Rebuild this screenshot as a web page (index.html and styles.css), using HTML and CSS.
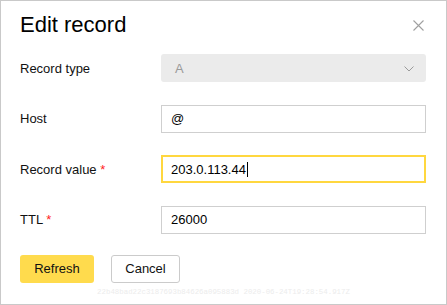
FILE: index.html
```html
<!DOCTYPE html>
<html lang="en">
<head>
<meta charset="utf-8">
<title>Edit record</title>
<link rel="stylesheet" href="styles.css">
</head>
<body>
<div class="dialog">
  <div class="header">
    <h1 class="title">Edit record</h1>
    <button class="close" aria-label="Close">
      <svg width="11" height="11" viewBox="0 0 11 11"><path d="M0.5 0.5L10.5 10.5M10.5 0.5L0.5 10.5" stroke="#a0a0a0" stroke-width="1.1" fill="none"/></svg>
    </button>
  </div>
  <div class="form">
    <div class="label">Record type</div>
    <div class="select">
      <span class="select-value">A</span>
      <svg class="chevron" width="10" height="6" viewBox="0 0 10 6"><path d="M0.5 0.5L5 5L9.5 0.5" stroke="#9a9a9a" stroke-width="1" fill="none"/></svg>
    </div>

    <div class="label">Host</div>
    <div class="input">@</div>

    <div class="label">Record value <span class="req">*</span></div>
    <div class="input input-focused">203.0.113.44<span class="caret"></span></div>

    <div class="label">TTL <span class="req">*</span></div>
    <div class="input">26000</div>
  </div>
  <div class="actions">
    <button class="btn btn-primary">Refresh</button>
    <button class="btn btn-default">Cancel</button>
  </div>
  <div class="meta">22b48bad22c3187693b84626a095883d 2020-06-24T19:28:54.917Z</div>
</div>
</body>
</html>
```

FILE: styles.css
```css
* {
  box-sizing: border-box;
}

html, body {
  margin: 0;
  padding: 0;
  background: #fff;
}

body {
  font-family: "Liberation Sans", Arial, sans-serif;
  color: #000;
}

.dialog {
  width: 447px;
  height: 305px;
  border: 1px solid #c9c9c9;
  padding: 11px 20px 0 18px;
  display: flex;
  flex-direction: column;
}

.header {
  display: flex;
  align-items: center;
  justify-content: space-between;
  height: 26px;
  margin-bottom: 16px;
}

.title {
  margin: 0 0 0 1px;
  font-size: 22px;
  line-height: 26px;
  font-weight: 400;
  color: #000;
}

.close {
  border: 0;
  background: none;
  padding: 0;
  margin: 1px 2px 0 0;
  width: 11px;
  height: 11px;
  display: block;
}

.close svg {
  display: block;
}

.form {
  display: grid;
  grid-template-columns: 142px 265px;
  grid-auto-rows: 28px;
  row-gap: 22.5px;
  align-items: center;
}

.label {
  font-size: 13px;
  padding-left: 1px;
  color: #111;
}

.req {
  color: #ff1f1f;
}

.select {
  height: 28px;
  background: #ebebeb;
  border-radius: 3px;
  display: flex;
  align-items: center;
  justify-content: space-between;
  padding: 0 12px 0 14px;
}

.select-value {
  font-size: 13px;
  color: #9a9a9a;
}

.chevron {
  display: block;
  margin-top: 1px;
}

.input {
  height: 28px;
  border: 1px solid #cfcfcf;
  font-size: 13px;
  padding-left: 9px;
  display: flex;
  align-items: center;
  color: #000;
}

.input-focused {
  border: 2px solid #ffd73f;
  padding-left: 8px;
}

.caret {
  display: inline-block;
  width: 1px;
  height: 15px;
  background: #000;
  margin-left: 1px;
}

.actions {
  display: flex;
  gap: 17px;
  margin-top: 21px;
  padding-left: 1px;
}

.btn {
  height: 28px;
  font-family: "Liberation Sans", Arial, sans-serif;
  font-size: 13px;
  border-radius: 3px;
  color: #111;
  cursor: pointer;
}

.btn-primary {
  width: 74px;
  background: #ffdb4d;
  border: 0;
}

.btn-default {
  width: 69px;
  background: #fff;
  border: 1px solid #cbcbcb;
}

.meta {
  margin-top: 5px;
  text-align: center;
  font-family: "Liberation Mono", monospace;
  font-size: 7.4px;
  line-height: 9px;
  color: #ececec;
  padding-left: 2px;
}
```
